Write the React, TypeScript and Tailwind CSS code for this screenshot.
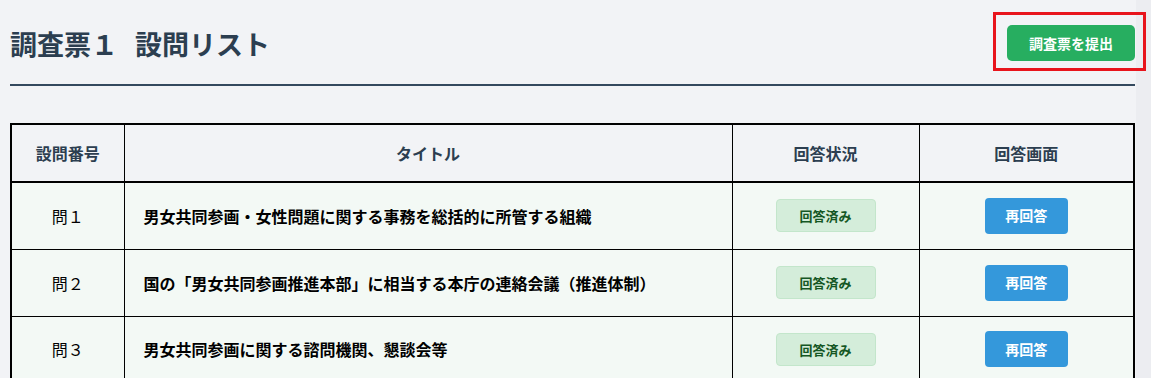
import React from "react";

const rows = [
  { no: "問１", title: "男女共同参画・女性問題に関する事務を総括的に所管する組織" },
  { no: "問２", title: "国の「男女共同参画推進本部」に相当する本庁の連絡会議（推進体制）" },
  { no: "問３", title: "男女共同参画に関する諮問機関、懇談会等" },
];

export default function App() {
  return (
    <div
      className="min-h-[378px] w-[1151px] bg-[#ecedf1] overflow-hidden"
      style={{ fontFamily: '"Noto Sans CJK JP", "Noto Sans", sans-serif' }}
    >
      <div className="w-[1136px] min-h-[378px] bg-[#f2f3f6] pl-[10px] pr-[1px]">
        <div className="flex items-center justify-between h-[86px] border-b-2 border-[#34495e] pt-[2px]">
          <h1 className="text-[27px] font-semibold text-[#2c3e50] leading-none flex">
            <span>調査票１</span>
            <span className="ml-[17px]">設問リスト</span>
          </h1>
          <div className="relative">
            <button className="h-[36px] w-[128px] rounded-[5px] bg-[#27ae60] text-white text-[14px] font-bold">
              調査票を提出
            </button>
            <div className="absolute -left-[14px] -top-[13px] w-[153px] h-[59px] border-[3px] border-[#e8141c] pointer-events-none" />
          </div>
        </div>
        <div className="pt-[37px]">
          <table className="w-full border-collapse border-2 border-black table-fixed">
            <thead>
              <tr className="h-[58px] bg-[#f2f3f6] text-[#2c3e50] text-[16px] font-bold border-b-2 border-black">
                <th className="w-[113px] border border-black font-bold">設問番号</th>
                <th className="w-[608px] border border-black font-bold">タイトル</th>
                <th className="w-[187px] border border-black font-bold">回答状況</th>
                <th className="border border-black font-bold">回答画面</th>
              </tr>
            </thead>
            <tbody>
              {rows.map((r) => (
                <tr key={r.no} className="h-[67px] bg-[#f3f9f5] text-black text-[16px]">
                  <td className="border border-black text-center">{r.no}</td>
                  <td className="border border-black pl-[19px] font-bold text-[16px]">{r.title}</td>
                  <td className="border border-black text-center">
                    <span className="inline-flex items-center justify-center w-[100px] h-[33px] rounded-[4px] bg-[#d4edda] border border-[#c3e6cb] text-[#155724] text-[13px] font-bold">
                      回答済み
                    </span>
                  </td>
                  <td className="border border-black text-center">
                    <button className="w-[83px] h-[36px] rounded-[4px] bg-[#3498db] text-white text-[14px] font-bold">
                      再回答
                    </button>
                  </td>
                </tr>
              ))}
            </tbody>
          </table>
        </div>
      </div>
    </div>
  );
}
